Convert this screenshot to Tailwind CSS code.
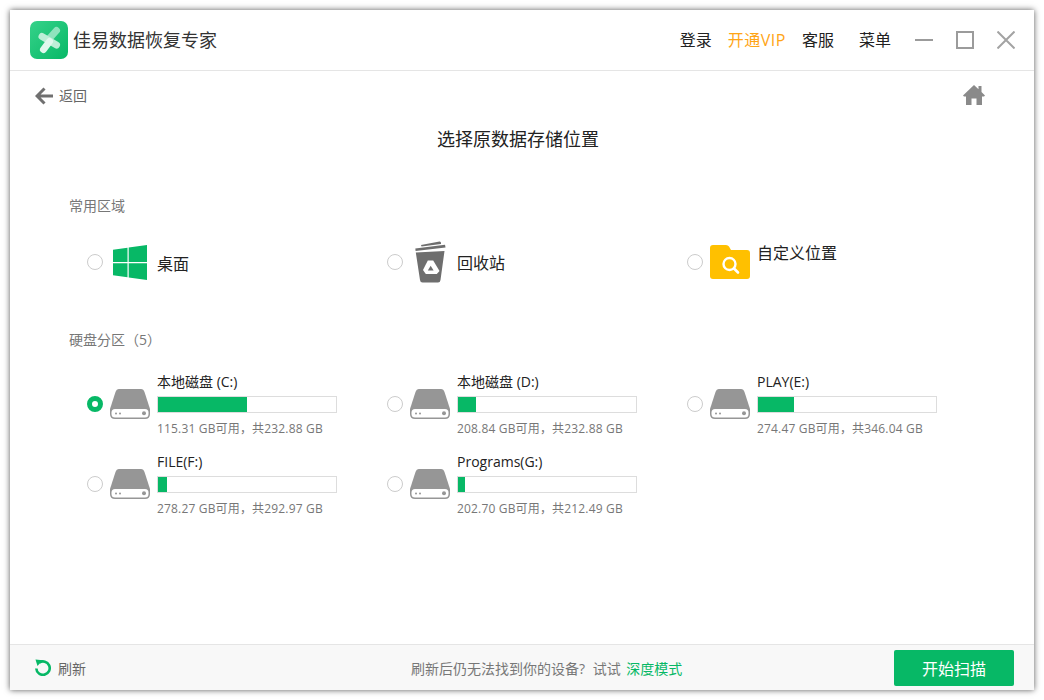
<!DOCTYPE html>
<html lang="zh-CN">
<head>
    <meta charset="UTF-8">
    <title>佳易数据恢复专家</title>
    <script src="https://cdn.jsdelivr.net/npm/@tailwindcss/browser@4"></script>
</head>
<body class="bg-white font-['Open_Sans','Noto_Sans_CJK_SC',sans-serif] text-[#222] overflow-hidden">

<div class="w-[1044px] h-[700px] p-[10px]">
<div class="w-[1024px] h-[680px] bg-white flex flex-col shadow-[0_0_6px_rgba(0,0,0,0.65)]">

    <!-- Title bar -->
    <header class="h-[61px] shrink-0 border-b border-[#e5e5e5] flex items-center pl-5 pr-[19px]">
        <svg class="w-[38px] h-[38px]" viewBox="0 0 38 38">
            <defs>
                <linearGradient id="lg" x1="0" y1="0" x2="1" y2="1">
                    <stop offset="0" stop-color="#36d28a"/>
                    <stop offset="1" stop-color="#07b866"/>
                </linearGradient>
            </defs>
            <rect width="38" height="38" rx="7" fill="url(#lg)"/>
            <path d="M18 19 L26.5 9.5" stroke="#8fe3bd" stroke-width="7" stroke-linecap="round"/>
            <path d="M12 15.5 L26.5 24" stroke="#bdeed7" stroke-width="7" stroke-linecap="round"/>
            <path d="M13.5 28.5 L19.5 20.5" stroke="#e0f8ed" stroke-width="7" stroke-linecap="round"/>
        </svg>
        <span class="ml-[5px] text-[18px] text-[#333] leading-none">佳易数据恢复专家</span>
        <nav class="ml-auto flex items-center text-[16px] leading-none">
            <span>登录</span>
            <span class="ml-4 text-[#ffa516] tracking-[0.5px]">开通VIP</span>
            <span class="ml-4">客服</span>
            <span class="ml-[25px]">菜单</span>
        </nav>
        <div class="ml-6 flex items-center">
            <div class="w-[18px] h-[2px] bg-[#9b9b9b]"></div>
            <div class="ml-[23px] w-[18px] h-[18px] border-2 border-[#9b9b9b]"></div>
            <svg class="ml-[23px] w-[18px] h-[18px]" viewBox="0 0 18 18" fill="none" stroke="#a3a3a3" stroke-width="2"><path d="M0.5 0.5 L17.5 17.5 M17.5 0.5 L0.5 17.5"/></svg>
        </div>
    </header>

    <main class="flex-1 flex flex-col min-h-0">
        <!-- Back row -->
        <div class="h-[50px] flex items-center pl-[25px] pr-[49px]">
            <svg class="w-[18px] h-[18px]" viewBox="0 0 18 18" fill="none" stroke="#707070" stroke-width="3"><path d="M9.5 1.5 L2 9 L9.5 16.5 M2 9 H18"/></svg>
            <span class="ml-[6px] text-[14px] text-[#666] leading-none">返回</span>
            <svg class="ml-auto -mt-[2px] w-[22px] h-[20px]" viewBox="0 0 22 20" fill="#8a8a8a"><path d="M11 0 L15.5 4.2 V1 H18.5 V7 L22 10.4 L21 11.5 H19 V20 H13.5 V13.5 H8.5 V20 H3 V11.5 H1 L0 10.4 Z"/></svg>
        </div>

        <h1 class="pl-[427px] text-[18px] leading-[18px] mt-[9px] text-[#222] font-normal">选择原数据存储位置</h1>

        <!-- Common locations -->
        <p class="ml-[59px] mt-[48px] text-[14px] leading-[20px] text-[#777]">常用区域</p>
        <div class="ml-[77px] mt-[24px] h-[44px] grid grid-cols-[300px_300px_300px]">
            <label class="flex items-center">
                <span class="w-4 h-4 rounded-full border border-[#ccc] shrink-0"></span>
                <svg class="ml-[10px] w-[34px] h-[35px]" viewBox="0 0 34 35" fill="#07b866"><path d="M0 4.7 L14.5 2.7 V17 H0 Z M15.7 2.5 L34 0 V17 H15.7 Z M0 18.2 H14.5 V32.3 L0 30.3 Z M15.7 18.2 H34 V35 L15.7 32.5 Z"/></svg>
                <span class="ml-[10px] mt-1 text-[16px] leading-none">桌面</span>
            </label>
            <label class="flex items-center">
                <span class="w-4 h-4 rounded-full border border-[#ccc] shrink-0"></span>
                <svg class="ml-3 w-8 h-[42px]" viewBox="0 0 32 42" fill="#6e6e6e">
                    <path d="M6 4 L24.5 0.5 Q26 0.3 26 2 V3 L6.5 5.5 Z"/>
                    <path d="M0.3 7.5 L30 3.8 L30.5 6.5 L0.6 10 Z"/>
                    <path d="M0.8 11.5 L29.5 10 L25.5 39 Q25.2 41.5 23 41.5 H7.5 Q5.3 41.5 5 39 Z"/>
                    <path d="M12.8 19.5 H18.2 L24.5 30 L21.8 33 H10.8 L8 29 Z" fill="#fff"/>
                    <path d="M15.7 24.8 L18.6 29.6 H12.8 Z"/>
                </svg>
                <span class="ml-[10px] mt-[2px] text-[16px] leading-none">回收站</span>
            </label>
            <label class="flex items-center">
                <span class="w-4 h-4 rounded-full border border-[#ccc] shrink-0"></span>
                <svg class="ml-[7px] w-10 h-[34px]" viewBox="0 0 40 34">
                    <path d="M0 3 Q0 0 3 0 H16 Q18 0 19 1.5 L21 5 H37 Q40 5 40 8 V31 Q40 34 37 34 H3 Q0 34 0 31 Z" fill="#ffc000"/>
                    <circle cx="19.5" cy="19" r="6" fill="none" stroke="#fff" stroke-width="2.4"/>
                    <path d="M24 23.5 L28 27.5" stroke="#fff" stroke-width="2.6" stroke-linecap="round"/>
                </svg>
                <span class="ml-[7px] -mt-[19px] text-[16px] leading-none">自定义位置</span>
            </label>
        </div>

        <!-- Partitions -->
        <p class="ml-[59px] mt-[46px] text-[14px] leading-[20px] text-[#777]">硬盘分区（5）</p>
        <div class="ml-[77px] mt-[22px] grid grid-cols-[300px_300px_300px] auto-rows-[80px]">

            <div class="flex items-start">
                <span class="mt-6 w-4 h-4 rounded-full border-[5px] border-[#07b866] shrink-0"></span>
                <svg class="ml-[7px] mt-[17px] w-10 h-[30px]" viewBox="0 0 40 30"><path d="M9 0 H31 Q33.5 0 34.5 3 L40 20 V25 Q40 30 35 30 H5 Q0 30 0 25 V20 L5.5 3 Q6.5 0 9 0 Z" fill="#969696"/><rect x="1.5" y="20" width="37" height="8.5" rx="3.5" fill="#fff"/><circle cx="34" cy="24.2" r="2" fill="#969696"/><circle cx="6" cy="24.5" r="1" fill="#969696"/><circle cx="10" cy="24.5" r="1" fill="#969696"/></svg>
                <div class="ml-[7px] w-[180px]">
                    <p class="text-[14px] leading-[20px]">本地磁盘 (C:)</p>
                    <div class="mt-1 h-[17px] border border-[#ddd]"><div class="h-full w-[50%] bg-[#07b866]"></div></div>
                    <p class="mt-[7px] text-[12px] leading-[18px] text-[#777] tracking-[0.17px]">115.31 GB可用，共232.88 GB</p>
                </div>
            </div>

            <div class="flex items-start">
                <span class="mt-6 w-4 h-4 rounded-full border border-[#ccc] shrink-0"></span>
                <svg class="ml-[7px] mt-[17px] w-10 h-[30px]" viewBox="0 0 40 30"><path d="M9 0 H31 Q33.5 0 34.5 3 L40 20 V25 Q40 30 35 30 H5 Q0 30 0 25 V20 L5.5 3 Q6.5 0 9 0 Z" fill="#969696"/><rect x="1.5" y="20" width="37" height="8.5" rx="3.5" fill="#fff"/><circle cx="34" cy="24.2" r="2" fill="#969696"/><circle cx="6" cy="24.5" r="1" fill="#969696"/><circle cx="10" cy="24.5" r="1" fill="#969696"/></svg>
                <div class="ml-[7px] w-[180px]">
                    <p class="text-[14px] leading-[20px]">本地磁盘 (D:)</p>
                    <div class="mt-1 h-[17px] border border-[#ddd]"><div class="h-full w-[10%] bg-[#07b866]"></div></div>
                    <p class="mt-[7px] text-[12px] leading-[18px] text-[#777] tracking-[0.17px]">208.84 GB可用，共232.88 GB</p>
                </div>
            </div>

            <div class="flex items-start">
                <span class="mt-6 w-4 h-4 rounded-full border border-[#ccc] shrink-0"></span>
                <svg class="ml-[7px] mt-[17px] w-10 h-[30px]" viewBox="0 0 40 30"><path d="M9 0 H31 Q33.5 0 34.5 3 L40 20 V25 Q40 30 35 30 H5 Q0 30 0 25 V20 L5.5 3 Q6.5 0 9 0 Z" fill="#969696"/><rect x="1.5" y="20" width="37" height="8.5" rx="3.5" fill="#fff"/><circle cx="34" cy="24.2" r="2" fill="#969696"/><circle cx="6" cy="24.5" r="1" fill="#969696"/><circle cx="10" cy="24.5" r="1" fill="#969696"/></svg>
                <div class="ml-[7px] w-[180px]">
                    <p class="text-[14px] leading-[20px]">PLAY(E:)</p>
                    <div class="mt-1 h-[17px] border border-[#ddd]"><div class="h-full w-[20%] bg-[#07b866]"></div></div>
                    <p class="mt-[7px] text-[12px] leading-[18px] text-[#777] tracking-[0.17px]">274.47 GB可用，共346.04 GB</p>
                </div>
            </div>

            <div class="flex items-start">
                <span class="mt-6 w-4 h-4 rounded-full border border-[#ccc] shrink-0"></span>
                <svg class="ml-[7px] mt-[17px] w-10 h-[30px]" viewBox="0 0 40 30"><path d="M9 0 H31 Q33.5 0 34.5 3 L40 20 V25 Q40 30 35 30 H5 Q0 30 0 25 V20 L5.5 3 Q6.5 0 9 0 Z" fill="#969696"/><rect x="1.5" y="20" width="37" height="8.5" rx="3.5" fill="#fff"/><circle cx="34" cy="24.2" r="2" fill="#969696"/><circle cx="6" cy="24.5" r="1" fill="#969696"/><circle cx="10" cy="24.5" r="1" fill="#969696"/></svg>
                <div class="ml-[7px] w-[180px]">
                    <p class="text-[14px] leading-[20px]">FILE(F:)</p>
                    <div class="mt-1 h-[17px] border border-[#ddd]"><div class="h-full w-[5%] bg-[#07b866]"></div></div>
                    <p class="mt-[7px] text-[12px] leading-[18px] text-[#777] tracking-[0.17px]">278.27 GB可用，共292.97 GB</p>
                </div>
            </div>

            <div class="flex items-start">
                <span class="mt-6 w-4 h-4 rounded-full border border-[#ccc] shrink-0"></span>
                <svg class="ml-[7px] mt-[17px] w-10 h-[30px]" viewBox="0 0 40 30"><path d="M9 0 H31 Q33.5 0 34.5 3 L40 20 V25 Q40 30 35 30 H5 Q0 30 0 25 V20 L5.5 3 Q6.5 0 9 0 Z" fill="#969696"/><rect x="1.5" y="20" width="37" height="8.5" rx="3.5" fill="#fff"/><circle cx="34" cy="24.2" r="2" fill="#969696"/><circle cx="6" cy="24.5" r="1" fill="#969696"/><circle cx="10" cy="24.5" r="1" fill="#969696"/></svg>
                <div class="ml-[7px] w-[180px]">
                    <p class="text-[14px] leading-[20px]">Programs(G:)</p>
                    <div class="mt-1 h-[17px] border border-[#ddd]"><div class="h-full w-[4%] bg-[#07b866]"></div></div>
                    <p class="mt-[7px] text-[12px] leading-[18px] text-[#777] tracking-[0.17px]">202.70 GB可用，共212.49 GB</p>
                </div>
            </div>
        </div>
    </main>

    <!-- Footer -->
    <footer class="h-[46px] shrink-0 border-t border-[#e5e5e5] bg-[#f8f8f8] flex items-center pl-[25px] pr-5">
        <svg class="w-4 h-[17px]" viewBox="0 0 16 17" fill="none"><path d="M4.2 3.6 A6.7 6.7 0 1 1 1.3 9.5" stroke="#07b866" stroke-width="2.6"/><path d="M0.5 0.5 L7.5 1.2 L2.5 7 Z" fill="#07b866"/></svg>
        <span class="ml-[7px] mt-[2px] text-[14px] leading-none text-[#666]">刷新</span>
        <div class="ml-[325px] mt-[3px] text-[14px] leading-none text-[#777]">刷新后仍无法找到你的设备?<span class="ml-1"> 试试</span> <span class="ml-[2px] text-[#07b866]">深度模式</span></div>
        <button class="ml-auto w-[120px] h-9 pt-[2px] rounded-[2px] bg-[#07b866] text-white text-[16px] leading-none">开始扫描</button>
    </footer>
</div>
</div>

</body>
</html>
